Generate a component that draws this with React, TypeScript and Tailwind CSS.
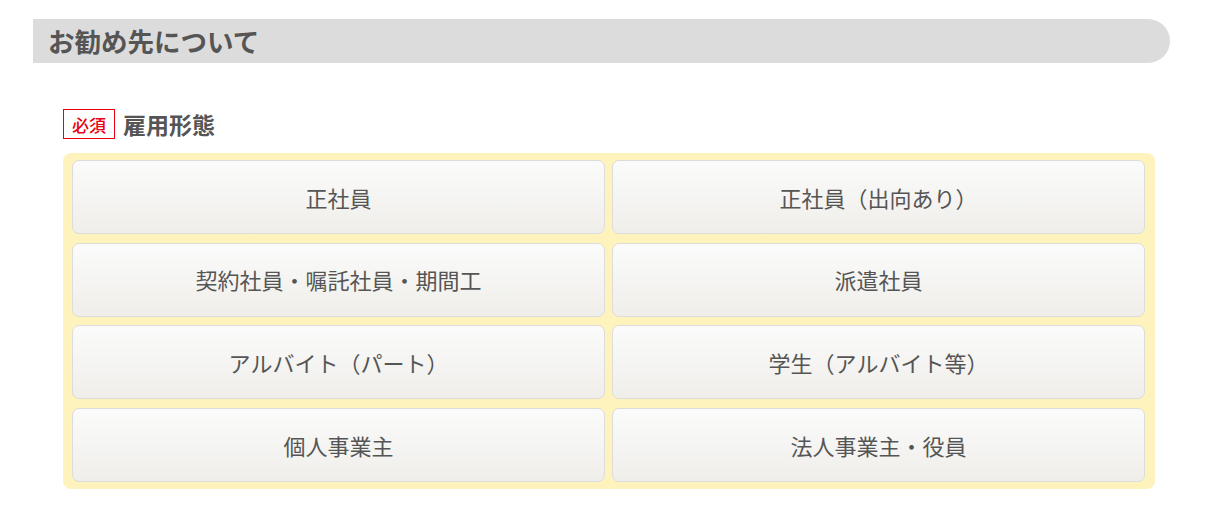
const employmentTypes = [
  "正社員",
  "正社員（出向あり）",
  "契約社員・嘱託社員・期間工",
  "派遣社員",
  "アルバイト（パート）",
  "学生（アルバイト等）",
  "個人事業主",
  "法人事業主・役員",
];

const jp = { fontFamily: '"Noto Sans CJK JP", "Noto Sans", sans-serif' };

export default function App() {
  return (
    <div className="min-h-[531px] w-[1211px] bg-white pt-[19px]" style={jp}>
      <h2 className="ml-[33px] flex h-[44px] w-[1137px] items-center rounded-r-[22px] bg-[#dcdcdc] pl-[15px] text-[26.5px] font-bold text-[#555]">
        お勧め先について
      </h2>

      <section className="ml-[63px] mt-[46px] w-[1092px]">
        <div className="flex h-[30px] items-center gap-[8px]">
          <span className="flex h-[30px] w-[52px] items-center justify-center border border-[#e60012] text-[17px] leading-none font-medium text-[#e60012]">
            必須
          </span>
          <span className="text-[23px] leading-[30px] font-bold text-[#555]">雇用形態</span>
        </div>

        <div className="mt-[14px] grid grid-cols-2 gap-x-[7px] gap-y-[8.7px] rounded-[8px] bg-[#fff3bd] pt-[7px] pr-[10px] pb-[7px] pl-[9px]">
          {employmentTypes.map((label) => (
            <button
              key={label}
              type="button"
              className="flex h-[74px] items-center justify-center rounded-[7px] border border-[#dcdcdc] bg-gradient-to-b from-[#fbfbfb] to-[#efeeea] text-[22px] text-[#555]"
            >
              {label}
            </button>
          ))}
        </div>
      </section>
    </div>
  );
}
